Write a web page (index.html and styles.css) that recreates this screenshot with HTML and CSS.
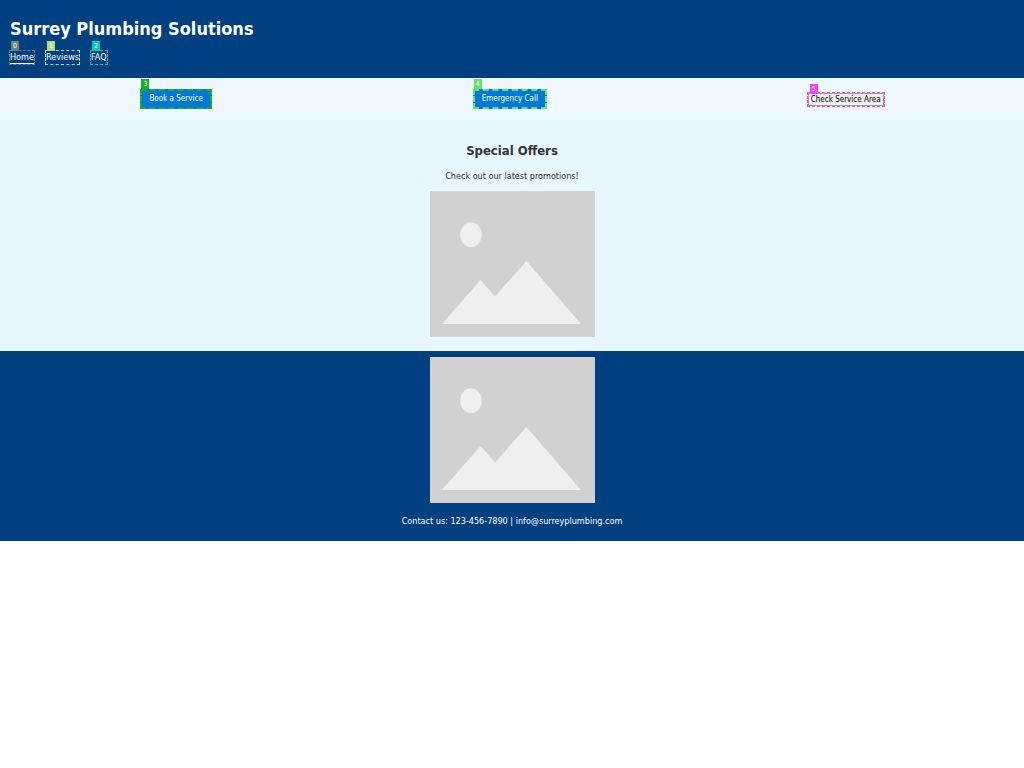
FILE: index.html
```html
<!DOCTYPE html>
<html lang="en">
<head>
<meta charset="utf-8">
<title>Surrey Plumbing Solutions</title>
<link rel="stylesheet" href="styles.css">
</head>
<body>
<header class="header">
  <h1 class="title">Surrey Plumbing Solutions</h1>
  <nav class="nav">
    <a class="mark gray current" href="#home">Home<span class="tag">0</span></a>
    <a class="mark lime" href="#reviews">Reviews<span class="tag">1</span></a>
    <a class="mark teal" href="#faq">FAQ<span class="tag">2</span></a>
  </nav>
</header>
<main>
  <div class="actions">
    <button class="mark btn primary green" type="button">Book a Service<span class="tag">3</span></button>
    <button class="mark btn primary light" type="button">Emergency Call<span class="tag">4</span></button>
    <button class="mark btn plain pink" type="button">Check Service Area<span class="tag">5</span></button>
  </div>
  <section class="offers">
    <h2 class="subtitle">Special Offers</h2>
    <p class="text">Check out our latest promotions!</p>
    <svg class="picture" viewBox="0 0 165 146" role="img" aria-label="Promotion">
      <rect width="165" height="146" fill="#d1d1d1"/>
      <ellipse cx="41" cy="43.700" rx="10.800" ry="12.400" fill="#efefef"/>
      <path d="M12 133L50.500 89L65 105.500L96.500 70L151 133Z" fill="#efefef"/>
    </svg>
  </section>
</main>
<footer class="footer">
  <svg class="picture" viewBox="0 0 165 146" role="img" aria-label="Company">
    <rect width="165" height="146" fill="#d1d1d1"/>
    <ellipse cx="41" cy="43.700" rx="10.800" ry="12.400" fill="#efefef"/>
    <path d="M12 133L50.500 89L65 105.500L96.500 70L151 133Z" fill="#efefef"/>
  </svg>
  <p class="text">Contact us: 123-456-7890 | info@surreyplumbing.com</p>
</footer>
</body>
</html>
```
FILE: styles.css
```css
* { box-sizing: border-box; }
body {
  margin: 0;
  font: 9px/12px "DejaVu Sans Condensed", "DejaVu Sans", sans-serif;
  color: #333;
  background: #fff;
}
.header {
  padding: 18px 10px 14px;
  background: #004080;
  color: #fff;
}
.title {
  margin: 0 0 12px;
  font-size: 18px;
  line-height: 21px;
}
.nav { display: flex; gap: 12px; }
.mark {
  position: relative;
  outline: 1px dashed var(--mark);
  color: inherit;
  text-decoration: none;
}
.current { border-bottom: 1px solid #fff; }
.tag {
  position: absolute;
  left: 1px;
  bottom: 100%;
  padding: 0 2px;
  font-size: 7px;
  line-height: 10px;
  color: #fff;
  background: var(--mark);
}
.gray { --mark: #6f7f77; }
.lime { --mark: #b0dc88; }
.teal { --mark: #00ccaa; }
.green { --mark: #18b028; }
.light { --mark: #66e070; }
.pink { --mark: #ff40f4; }
.actions {
  display: flex;
  justify-content: space-around;
  align-items: center;
  padding: 11px 10px;
  background: #f0f8ff;
}
.btn {
  font: inherit;
  font-size: 8px;
  border: 0;
}
.primary {
  padding: 4px 9px;
  color: #fff;
  background: #0078d7;
  outline-width: 2px;
  outline-offset: -2px;
}
.plain {
  padding: 0 2px;
  color: #000;
  border: 1px solid #a0a0a0;
  background: #efefef;
  line-height: 11px;
}
.offers {
  padding: 22px 10px 14px;
  background: #e6f7ff;
  text-align: center;
}
.subtitle { margin: 0 0 10px; font-size: 13px; line-height: 18px; }
.text { margin: 8px 0 9px; }
.picture { display: block; width: 165px; margin: 0 auto; }
.footer {
  padding: 6px 10px;
  color: #fff;
  background: #004080;
  text-align: center;
}
.footer .text { margin: 12px 0 8px; }
```
